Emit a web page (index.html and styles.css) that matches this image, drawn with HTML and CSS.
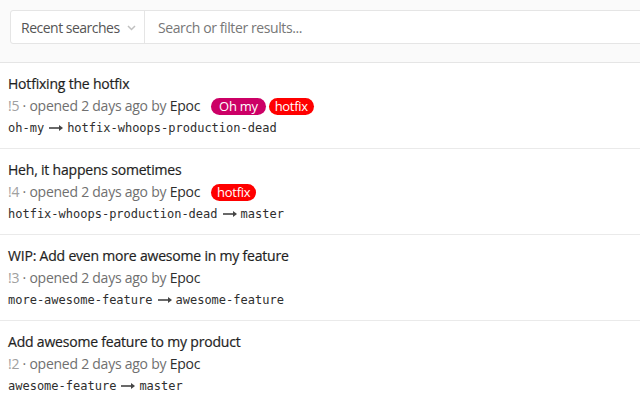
FILE: index.html
```html
<!DOCTYPE html>
<html>
<head>
<meta charset="utf-8">
<link rel="stylesheet" href="styles.css">
</head>
<body>
<div class="filter-bar">
  <div class="search-box">
    <div class="recent">Recent searches
      <svg class="chev" width="9" height="6" viewBox="0 0 9 6"><path d="M1 1l3.5 3.5L8 1" fill="none" stroke="#c0c0c0" stroke-width="1.5"/></svg>
    </div>
    <div class="placeholder">Search or filter results...</div>
  </div>
</div>
<ul class="mr-list">
  <li class="mr">
    <div class="title">Hotfixing the hotfix</div>
    <div class="meta"><span class="iid">!5</span> · opened 2 days ago by <span class="author">Epoc</span>
      <span class="labels"><span class="label l-ohmy">Oh my</span><span class="label l-hotfix">hotfix</span></span></div>
    <div class="branches">oh-my<svg class="arrow" width="14" height="8" viewBox="0 0 14 8"><path d="M0 4h11" stroke="#444" stroke-width="1.6"/><path d="M10 1l4 3-4 3z" fill="#444"/></svg>hotfix-whoops-production-dead</div>
  </li>
  <li class="mr">
    <div class="title">Heh, it happens sometimes</div>
    <div class="meta"><span class="iid">!4</span> · opened 2 days ago by <span class="author">Epoc</span>
      <span class="labels"><span class="label l-hotfix">hotfix</span></span></div>
    <div class="branches">hotfix-whoops-production-dead<svg class="arrow" width="14" height="8" viewBox="0 0 14 8"><path d="M0 4h11" stroke="#444" stroke-width="1.6"/><path d="M10 1l4 3-4 3z" fill="#444"/></svg>master</div>
  </li>
  <li class="mr">
    <div class="title">WIP: Add even more awesome in my feature</div>
    <div class="meta"><span class="iid">!3</span> · opened 2 days ago by <span class="author">Epoc</span></div>
    <div class="branches">more-awesome-feature<svg class="arrow" width="14" height="8" viewBox="0 0 14 8"><path d="M0 4h11" stroke="#444" stroke-width="1.6"/><path d="M10 1l4 3-4 3z" fill="#444"/></svg>awesome-feature</div>
  </li>
  <li class="mr">
    <div class="title">Add awesome feature to my product</div>
    <div class="meta"><span class="iid">!2</span> · opened 2 days ago by <span class="author">Epoc</span></div>
    <div class="branches">awesome-feature<svg class="arrow" width="14" height="8" viewBox="0 0 14 8"><path d="M0 4h11" stroke="#444" stroke-width="1.6"/><path d="M10 1l4 3-4 3z" fill="#444"/></svg>master</div>
  </li>
</ul>
</body>
</html>
```
FILE: styles.css
```css
html, body {
  margin: 0;
  padding: 0;
  background: #fff;
  font-family: "Open Sans", "Noto Sans", sans-serif;
  color: #2e2e2e;
  overflow: hidden;
}
.filter-bar {
  background: #fafafa;
  border-bottom: 1px solid #e5e5e5;
  padding: 10px 0 18px 10px;
}
.search-box {
  display: flex;
  height: 32px;
  margin-right: -20px;
  background: #fff;
  border: 1px solid #e5e5e5;
  border-radius: 3px;
}
.recent {
  display: flex;
  align-items: center;
  width: 134px;
  box-sizing: border-box;
  padding-left: 10px;
  border-right: 1px solid #e5e5e5;
  font-size: 14px;
  color: #555;
  letter-spacing: -0.5px;
}
.chev { margin-left: 7px; margin-top: 1px; }
.placeholder {
  display: flex;
  align-items: center;
  padding-left: 13px;
  font-size: 14px;
  color: #777;
  letter-spacing: -0.4px;
}
.mr-list {
  list-style: none;
  margin: 0;
  padding: 0;
}
.mr {
  border-bottom: 1px solid #eaeaea;
  padding: 10px 8px 9px;
}
.title {
  font-size: 14px;
  line-height: 22px;
  height: 22px;
  font-weight: 400;
  color: #1f1f1f;
  letter-spacing: -0.2px;
  -webkit-text-stroke: 0.2px #1f1f1f;
}
.meta {
  font-size: 14px;
  line-height: 22px;
  height: 22px;
  color: #707070;
  letter-spacing: -0.25px;
  display: flex;
  align-items: center;
  white-space: pre;
}
.iid { color: #a0a0a0; }
.author { color: #2e2e2e; }
.labels { display: flex; gap: 3px; margin-left: 11px; }
.label {
  display: inline-block;
  color: #fff;
  font-size: 13px;
  line-height: 17px;
  padding: 0 8px;
  border-radius: 9px;
  letter-spacing: -0.3px;
}
.l-ohmy { background: #cc0066; }
.l-hotfix { background: #ff0000; padding: 0 6px; }
.branches {
  display: flex;
  align-items: center;
  font-family: "DejaVu Sans Mono", monospace;
  font-size: 12px;
  line-height: 22px;
  height: 22px;
  color: #2e2e2e;
  white-space: pre;
}
.arrow { margin: 0 4px 0 5px; }
```
